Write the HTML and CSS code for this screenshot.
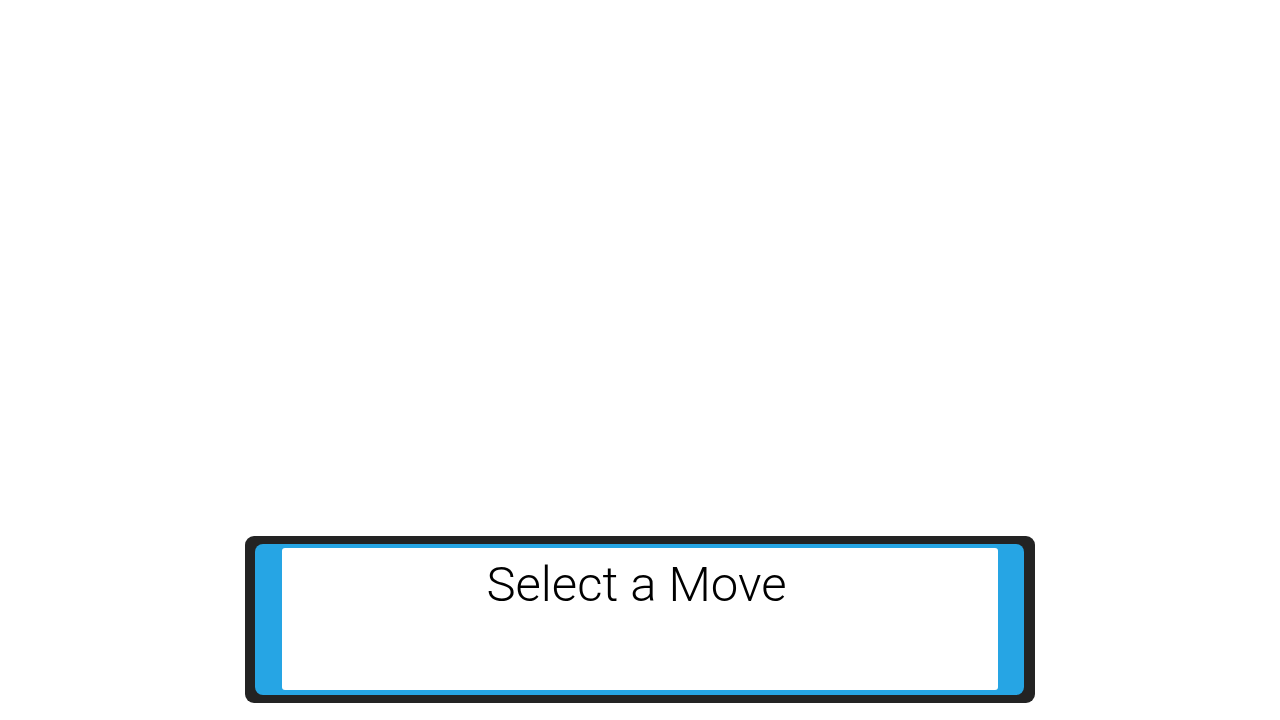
FILE: index.html
```html
<!DOCTYPE html>
<html>
<head>
<meta charset="utf-8">
<link rel="stylesheet" href="styles.css">
</head>
<body>
<div class="stage">
  <div class="dialog">
    <div class="dialog-inner">
      <div class="dialog-text">
        <div class="prompt">Select a Move</div>
      </div>
    </div>
  </div>
</div>
</body>
</html>
```
FILE: styles.css
```css
html, body {
  margin: 0;
  padding: 0;
  background: #ffffff;
}
.stage {
  width: 1280px;
  height: 720px;
  display: flex;
  flex-direction: column;
  justify-content: flex-end;
  align-items: center;
  padding-bottom: 17px;
  box-sizing: border-box;
}
.dialog {
  width: 790px;
  height: 167px;
  box-sizing: border-box;
  background: #232323;
  border-radius: 9px;
  padding: 8px 11px 8px 10px;
}
.dialog-inner {
  height: 100%;
  box-sizing: border-box;
  background: #26a5e4;
  border-radius: 8px;
  padding: 4px 26px 5px 27px;
}
.dialog-text {
  height: 100%;
  background: #ffffff;
  border-radius: 3px;
  display: flex;
  justify-content: center;
}
.prompt {
  font-family: Roboto, "Liberation Sans", Arial, sans-serif;
  font-weight: 300;
  font-size: 49px;
  line-height: 1;
  margin-top: 12px;
  margin-left: -7px;
  color: #000;
}
```
